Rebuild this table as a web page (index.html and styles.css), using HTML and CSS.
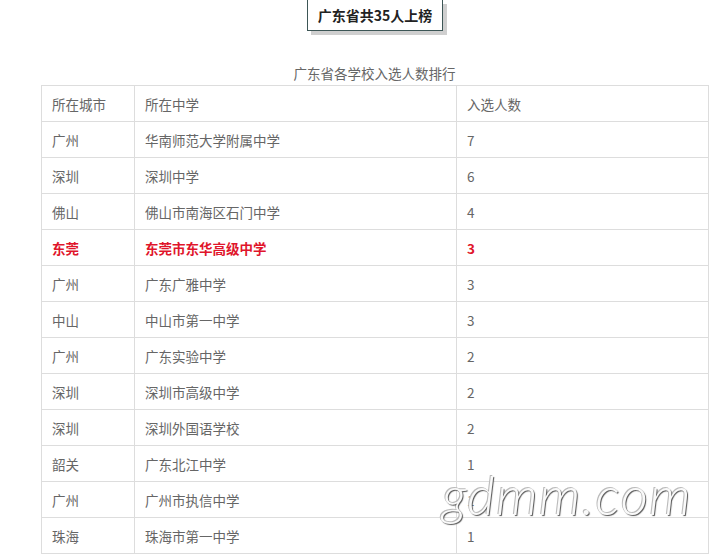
FILE: index.html
```html
<!DOCTYPE html>
<html lang="zh">
<head>
<meta charset="utf-8">
<link rel="stylesheet" href="styles.css">
</head>
<body>
<div class="page">
  <div class="badge-row"><div class="badge">广东省共35人上榜</div></div>
  <div class="caption">广东省各学校入选人数排行</div>
  <table class="rank">
    <colgroup><col class="c1"><col class="c2"><col class="c3"></colgroup>
    <tr><td>所在城市</td><td>所在中学</td><td>入选人数</td></tr>
    <tr><td>广州</td><td>华南师范大学附属中学</td><td>7</td></tr>
    <tr><td>深圳</td><td>深圳中学</td><td>6</td></tr>
    <tr><td>佛山</td><td>佛山市南海区石门中学</td><td>4</td></tr>
    <tr class="hl"><td>东莞</td><td>东莞市东华高级中学</td><td>3</td></tr>
    <tr><td>广州</td><td>广东广雅中学</td><td>3</td></tr>
    <tr><td>中山</td><td>中山市第一中学</td><td>3</td></tr>
    <tr><td>广州</td><td>广东实验中学</td><td>2</td></tr>
    <tr><td>深圳</td><td>深圳市高级中学</td><td>2</td></tr>
    <tr><td>深圳</td><td>深圳外国语学校</td><td>2</td></tr>
    <tr><td>韶关</td><td>广东北江中学</td><td>1</td></tr>
    <tr><td>广州</td><td>广州市执信中学</td><td>1</td></tr>
    <tr><td>珠海</td><td>珠海市第一中学</td><td>1</td></tr>
  </table>
  <div class="watermark">gdmm.com</div>
</div>
</body>
</html>
```
FILE: styles.css
```css
html, body {
  margin: 0;
  padding: 0;
  background: #fff;
}
body {
  font-family: "Noto Sans CJK SC", "Noto Sans", sans-serif;
  color: #666;
  overflow: hidden;
}
.page {
  position: relative;
  width: 711px;
  height: 557px;
}
.badge-row {
  display: flex;
  justify-content: flex-start;
  padding-left: 307px;
}
.badge {
  box-sizing: border-box;
  width: 136px;
  height: 31px;
  border: 1px solid #3d5656;
  border-top: none;
  box-shadow: 4px 4px 0 #cfcfcf;
  display: flex;
  align-items: center;
  justify-content: center;
  font-size: 14px;
  font-weight: bold;
  color: #222;
  padding-bottom: 1px;
}
.caption {
  margin-top: 32px;
  margin-left: 41px;
  width: 667px;
  text-align: center;
  font-size: 13.5px;
  line-height: 20px;
  height: 22px;
}
.rank {
  margin-left: 41px;
  width: 667px;
  border-collapse: collapse;
  table-layout: fixed;
  font-size: 13.5px;
}
.c1 { width: 93px; }
.c2 { width: 322px; }
.c3 { width: 252px; }
.rank td {
  border: 1px solid #ddd;
  height: 36px;
  padding: 0 0 0 10px;
  box-sizing: border-box;
  line-height: 20px;
  vertical-align: middle;
  color: #666;
}
.rank tr.hl td {
  color: #e0152b;
  font-weight: bold;
}
.watermark {
  position: absolute;
  left: 442px;
  top: 465px;
  font-family: "Lato", "DejaVu Sans", sans-serif;
  font-style: italic;
  font-weight: 300;
  font-size: 53px;
  line-height: 60px;
  color: #fafafa;
  letter-spacing: 1.5px;
  text-shadow: 1px 1px 1px #555, -1px -1px 0 #bbb;
}
```
